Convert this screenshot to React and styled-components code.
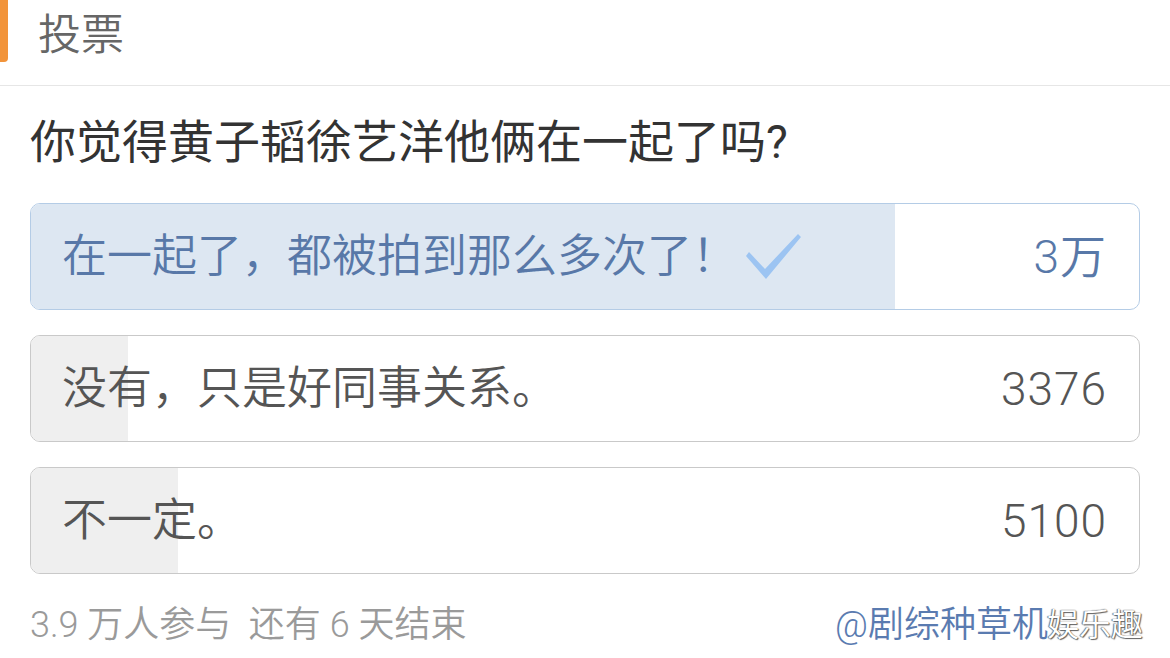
import React from 'react';
import styled, { createGlobalStyle } from 'styled-components';

const GlobalStyle = createGlobalStyle`
  html, body {
    margin: 0;
    padding: 0;
    background: #ffffff;
  }
  body {
    font-family: Roboto, "Noto Sans CJK SC", sans-serif;
    font-weight: 350;
  }
`;

const Page = styled.div`
  width: 1170px;
  height: 658px;
  overflow: hidden;
  background: #fff;
`;

const Header = styled.div`
  display: flex;
  align-items: flex-start;
  height: 85px;
  border-bottom: 1px solid #e6e6e6;
`;

const Marker = styled.div`
  width: 8px;
  height: 62px;
  background: #f2943a;
  border-radius: 0 0 4px 0;
`;

const Title = styled.div`
  margin-left: 30px;
  margin-top: 10px;
  font-size: 43px;
  line-height: 50px;
  color: #666;
`;

const Body = styled.div`
  padding: 0 30px;
`;

const Question = styled.div`
  padding-top: 28px;
  margin-bottom: 33px;
  font-size: 46px;
  font-weight: 400;
  line-height: 56px;
  color: #333;
  white-space: nowrap;
`;

const Options = styled.div`
  display: flex;
  flex-direction: column;
  gap: 25px;
`;

const Option = styled.div`
  position: relative;
  height: 107px;
  box-sizing: border-box;
  border: 1px solid ${p => (p.$chosen ? '#b4cce6' : '#c9c9c9')};
  border-radius: 10px;
  overflow: hidden;
  display: flex;
  align-items: center;
  justify-content: space-between;
  padding: 0 32px 0 31px;
  color: ${p => (p.$chosen ? '#5878a8' : '#555')};
`;

const Fill = styled.div`
  position: absolute;
  left: 0;
  top: 0;
  bottom: 0;
  background: ${p => (p.$chosen ? '#dde7f2' : '#efefef')};
`;

const Label = styled.div`
  position: relative;
  display: flex;
  align-items: center;
  gap: 8px;
  font-size: 45px;
  line-height: 52px;
  white-space: nowrap;
`;

const Count = styled.div`
  position: relative;
  font-size: 46px;
  line-height: 52px;
  letter-spacing: 1px;
`;

const Footer = styled.div`
  position: relative;
  display: flex;
  align-items: center;
  justify-content: space-between;
  margin-top: 26px;
  font-size: 36px;
  line-height: 50px;
  white-space: nowrap;
`;

const Meta = styled.div`
  color: #9a9a9a;
`;

const Author = styled.div`
  position: relative;
  color: #5a7bb0;
  margin-right: 92px;
`;

const Watermark = styled.span`
  position: absolute;
  left: 212px;
  top: 0;
  font-size: 32px;
  color: #ffffff;
  text-shadow: 0 0 1px #333, 1px 1px 1px #555, -1px 0 1px #777;
  opacity: 0.9;
`;

const Check = () => (
  <svg width="56" height="46" viewBox="0 0 56 46">
    <path d="M1 22 L4 18 L20 35 L53 0 L56 3 L21 45 Z" fill="#9cc4f2" />
  </svg>
);

const options = [
  { text: '在一起了，都被拍到那么多次了！', votes: 30000, shown: '3万', chosen: true },
  { text: '没有，只是好同事关系。', votes: 3376, shown: '3376' },
  { text: '不一定。', votes: 5100, shown: '5100' },
];

const total = options.reduce((s, o) => s + o.votes, 0);

export default function App() {
  return (
    <Page>
      <GlobalStyle />
      <Header>
        <Marker />
        <Title>投票</Title>
      </Header>
      <Body>
        <Question>你觉得黄子韬徐艺洋他俩在一起了吗?</Question>
        <Options>
          {options.map(o => (
            <Option key={o.text} $chosen={o.chosen}>
              <Fill $chosen={o.chosen} style={{ width: `${(o.votes / total) * 100}%` }} />
              <Label>
                {o.text}
                {o.chosen && <Check />}
              </Label>
              <Count>{o.shown}</Count>
            </Option>
          ))}
        </Options>
        <Footer>
          <Meta>3.9 万人参与 &nbsp;还有 6 天结束</Meta>
          <Author>
            @剧综种草机
            <Watermark>娱乐趣</Watermark>
          </Author>
        </Footer>
      </Body>
    </Page>
  );
}
